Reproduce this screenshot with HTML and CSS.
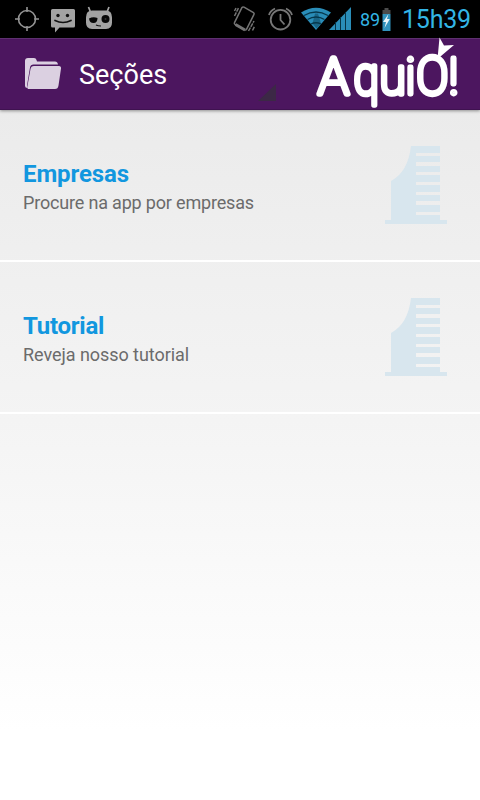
FILE: index.html
```html
<!DOCTYPE html>
<html lang="pt">
<head>
<meta charset="utf-8">
<title>Seções</title>
<link rel="stylesheet" href="styles.css">
</head>
<body>
<div class="status">
  <svg class="status-icons" width="360" height="38" viewBox="0 0 360 38">
    <g fill="none" stroke="#949494" stroke-width="1.6"><circle cx="27" cy="19" r="8.5"/><path d="M27 7v5M27 26v5M15 19h5M34 19h5"/></g>
    <path fill="#a3a3a3" d="M52.500 9h21q1.500 0 1.500 1.500v15.500q0 1.500-1.500 1.500h-14l-4.500 5v-5h-2.500q-1.500 0-1.500-1.500v-15.500q0-1.500 1.500-1.500z"/>
    <g fill="#111"><circle cx="58" cy="15.500" r="1.700"/><circle cx="67.500" cy="15.500" r="1.700"/></g>
    <path d="M55 20.500q8 4 16 0" fill="none" stroke="#111" stroke-width="1.700" stroke-linecap="round"/>
    <path d="M90.500 12l-2-5M107 12l2-5" stroke="#a3a3a3" stroke-width="1.700"/>
    <path fill="#a3a3a3" d="M92 10.500h14q6 0 6 7v5q0 6.500-6 6.500h-14q-6 0-6-6.500v-5q0-7 6-7z"/>
    <g fill="#080808"><path d="M89 18.500q4-2 8.500-.5q0 5-4 5q-4 0-4.500-4.500z"/><circle cx="105.500" cy="19" r="4"/></g>
    <circle cx="105.500" cy="19" r="1" fill="#333"/><path d="M96 25q2 1 5 1" stroke="#111" fill="none" stroke-width="1.200"/>
    <g fill="none" stroke="#747474" stroke-width="1.500"><path d="M242 7.500q.8-1 2-.3l9.500 5.500q1 .7.500 1.600l-7.500 15q-.7 1.200-2 .5l-9.500-5.500q-1-.7-.5-1.700z"/><path d="M235.500 24.500l9.500 5.500" stroke-width="3"/><path d="M234.500 16l4-8M234.500 11l1.500-3M248.500 31l5.500-10M252.500 30.500l2-4" stroke-dasharray="4 .8"/></g>
    <g fill="none" stroke="#777" stroke-width="1.800"><circle cx="280.500" cy="19.700" r="9.800"/><path d="M280.500 14v6l4 4.500M269 15q1-4 6-6.500M286 8.500q5 2.500 6 6.500"/></g>
    <path fill="#2a8db8" d="M316 30L301 12.500Q316 3 331 12.500z"/>
    <g fill="none" stroke="#06384c" stroke-width="1.300"><path d="M304 15.500q12-7 24 0M307.500 19.500q8.500-5 17 0M311 24q5-2.500 10 0"/></g>
    <path d="M315 13.500h3l3 10-4.500 5-4-5z" fill="#06384c" opacity=".45"/>
    <path fill="#2a8db8" d="M329 30L351 7v23z"/>
    <path d="M335.500 22v8M340.500 17v13M345.500 12v18" stroke="#073345" stroke-width="1"/>
  </svg>
  <span class="level">89</span>
  <svg class="battery" width="9" height="24" viewBox="0 0 9 24"><path fill="#4b4b4b" d="M2.500 1h4v2h2v4H.5V3h2z"/><path fill="#3193bd" d="M.5 7h8v17h-8z"/><path fill="#e9f5fa" d="M6.500 7L1 15H4l-1.500 6 5.300-9H5z"/></svg>
  <span class="clock">15h39</span>
</div>
<header class="bar">
  <svg class="folder" width="38" height="34" viewBox="0 0 38 34">
    <path fill="#dbd0e1" d="M1 29V4q0-3 3-3h6q2 0 2.500 2l.5 1.500h18q2.500 0 3 3H9.500q-3 0-3.500 3L3 28.500l.6 2.500Q1 31 1 29z"/>
    <path fill="#dbd0e1" d="M10 9h25q2.300 0 2 2.500l-2.500 17q-.5 3.500-3.500 3.500H4q-1-.7-.6-2.700L6.500 12q.5-3 3.500-3z"/>
  </svg>
  <h1>Seções</h1>
  <svg class="corner" width="18" height="17" viewBox="0 0 18 17"><path fill="#3c2846" d="M18 0v17H0z"/></svg>
  <svg class="logo" width="150" height="74" viewBox="310 37 150 74">
    <g class="wordmark">
      <text transform="translate(318.300 95) scale(1.020 1)">A</text>
      <text transform="translate(353.800 95) scale(.91 1.020)">q</text>
      <text transform="translate(379.500 95) scale(.96 1)">u</text>
      <text class="dotted" y="95" x="405.300">i</text>
      <text transform="translate(416.500 95) scale(.95 1.030)">O</text>
      <text class="dotted" x="448.800" y="95">!</text>
    </g>
    <path fill="#fff" d="M439.500 38.500l4.500 8 10-.5-16.500 14z"/>
  </svg>
</header>
<main>
  <section class="row">
    <div class="copy"><h2>Empresas</h2><p>Procure na app por empresas</p></div>
    <svg class="building" width="62" height="78" viewBox="0 0 62 78"><path d="M26 0h29v7H31v3h24v6H31v4h24v6H31v3h24v7H31v3h24v7H31v3h24v6H31v4h24v7H31v3h24v5h7v5H0v-5h6V35Q23 26 26 0z"/></svg>
  </section>
  <section class="row">
    <div class="copy"><h2 class="tutorial">Tutorial</h2><p class="short">Reveja nosso tutorial</p></div>
    <svg class="building" width="62" height="78" viewBox="0 0 62 78"><path d="M26 0h29v7H31v3h24v6H31v4h24v6H31v3h24v7H31v3h24v7H31v3h24v6H31v4h24v7H31v3h24v5h7v5H0v-5h6V35Q23 26 26 0z"/></svg>
  </section>
</main>
</body>
</html>
```
FILE: styles.css
```css
* { box-sizing: border-box; }
body { margin: 0; width: 480px; height: 800px; overflow: hidden; font-family: Roboto, sans-serif; display: flex; flex-direction: column; }
h1, h2, p { margin: 0; font-weight: 400; white-space: nowrap; }
svg { display: block; flex: none; }
.status { height: 38px; flex: none; background: #000; color: #33b5e5; display: flex; align-items: center; }
.level { width: 22px; font-size: 18px; }
.clock { margin-left: 11px; font-size: 25px; line-height: 38px; letter-spacing: -.2px; padding-top: 1px; }
.bar { height: 72px; flex: none; background: #4c165f; border-top: 1px solid #5e3070; border-bottom: 1px solid #3f1250; display: flex; align-items: center; padding-left: 24px; position: relative; z-index: 1; box-shadow: 0 1px 3px rgba(0,0,0,.4); }
.bar h1 { color: #fff; font-size: 27px; margin-left: 17px; width: 179px; padding-top: 2px; }
.corner { align-self: flex-end; margin-bottom: 8px; }
.logo { margin: -2px 0 0 34px; overflow: visible; }
.wordmark { font-size: 50px; font-weight: 100; fill: #fff; stroke: #fff; stroke-width: 5.4px; stroke-linejoin: round; }
.dotted { stroke-width: 4.8px; }
main { flex: 1; background: linear-gradient(#ebebeb, #f4f4f4 45%, #fff 90%); }
.row { height: 152px; border-bottom: 2px solid #fff; padding: 0 33px 1px 23px; display: flex; align-items: center; justify-content: space-between; }
.copy { padding-top: 5px; }
.row h2 { color: #1297df; font-size: 24px; line-height: 30px; font-weight: 700; letter-spacing: -.1px; }
.row .tutorial { letter-spacing: -.25px; }
.row p { color: #6b6b6b; font-size: 18px; line-height: 27px; letter-spacing: -.18px; }
.row .short { letter-spacing: -.05px; }
.building { fill: #d8e6ee; }
```
